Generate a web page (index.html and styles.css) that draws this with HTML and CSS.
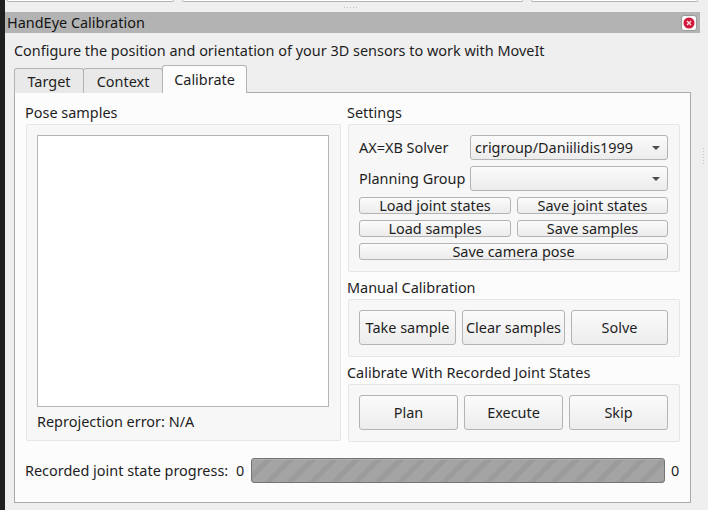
FILE: index.html
```html
<!DOCTYPE html>
<html lang="en">
<head>
    <meta charset="UTF-8">
    <title>HandEye Calibration</title>
    <link rel="stylesheet" href="styles.css">
</head>
<body>
    <div class="strip"></div>
    <div class="main">
        <div class="topbar">
            <div class="topbtn first"></div>
            <div class="topbtn middle"></div>
            <div class="topbtn last"></div>
        </div>
        <div class="grip-h"></div>
        <div class="titlebar">
            <span>HandEye Calibration</span>
            <button class="close" aria-label="Close">
                <svg width="12" height="12" viewBox="0 0 12 12">
                    <circle cx="6" cy="6" r="5.5" fill="#d3173a"/>
                    <path d="M4 4l4 4M8 4l-4 4" stroke="#f8dfe3" stroke-width="1.4" fill="none"/>
                </svg>
            </button>
        </div>
        <div class="content">
            <p class="intro">Configure the position and orientation of your 3D sensors to work with MoveIt</p>
            <div class="tabs">
                <div class="tab">Target</div>
                <div class="tab">Context</div>
                <div class="tab active">Calibrate</div>
            </div>
            <div class="pane">
                <div class="columns">
                    <div class="col-left">
                        <div class="heading">Pose samples</div>
                        <div class="group pose">
                            <div class="list"></div>
                            <div class="reproj">Reprojection error: N/A</div>
                        </div>
                    </div>
                    <div class="col-right">
                        <div class="heading">Settings</div>
                        <div class="group settings">
                            <div class="form-row">
                                <span class="form-label">AX=XB Solver</span>
                                <div class="combo">crigroup/Daniilidis1999<i class="arrow"></i></div>
                            </div>
                            <div class="form-row">
                                <span class="form-label">Planning Group</span>
                                <div class="combo"><i class="arrow"></i></div>
                            </div>
                            <div class="small-row">
                                <button class="btn small">Load joint states</button>
                                <button class="btn small">Save joint states</button>
                            </div>
                            <div class="small-row">
                                <button class="btn small">Load samples</button>
                                <button class="btn small">Save samples</button>
                            </div>
                            <button class="btn small">Save camera pose</button>
                        </div>
                        <div class="heading next">Manual Calibration</div>
                        <div class="group btn-row manual">
                            <button class="btn big">Take sample</button>
                            <button class="btn big">Clear samples</button>
                            <button class="btn big">Solve</button>
                        </div>
                        <div class="heading next">Calibrate With Recorded Joint States</div>
                        <div class="group btn-row recorded">
                            <button class="btn big">Plan</button>
                            <button class="btn big">Execute</button>
                            <button class="btn big">Skip</button>
                        </div>
                    </div>
                </div>
                <div class="progress-row">
                    <span class="progress-label">Recorded joint state progress:</span>
                    <span class="count">0</span>
                    <div class="progress"></div>
                    <span>0</span>
                </div>
            </div>
        </div>
    </div>
    <div class="grip-v"></div>
</body>
</html>
```

FILE: styles.css
```css
html, body {
    margin: 0;
    height: 510px;
    overflow: hidden;
}
body {
    display: flex;
    background-color: #efefef;
    color: #1e1e1e;
    font-family: "Noto Sans", sans-serif;
    font-size: 14.45px;
    position: relative;
}
.strip {
    width: 5px;
    background-color: #1f1f1f;
    flex: none;
}
.main {
    width: 695px;
    flex: none;
}
.topbar {
    height: 2px;
    display: flex;
    padding-left: 2px;
    gap: 8px;
}
.topbtn {
    height: 1px;
    background-color: #fff;
    border: 1px solid #b4b4b4;
    border-top: none;
    border-radius: 0 0 3px 3px;
}
.first { width: 165px; }
.middle { width: 339px; }
.last { width: 165px; }
.grip-h {
    height: 1px;
    width: 14px;
    margin: 5px 0 4px 339px;
    background-image: repeating-linear-gradient(90deg, #bdbdbd 0 1px, transparent 1px 3px);
}
.titlebar {
    height: 21px;
    background-color: #b3b3b3;
    display: flex;
    align-items: center;
    justify-content: space-between;
    padding: 0 3px 0 2px;
    color: #141414;
}
.close {
    width: 16px;
    height: 16px;
    padding: 0;
    background-color: #fbfbfb;
    border: 1px solid #9a9a9a;
    border-radius: 3px;
    display: flex;
    align-items: center;
    justify-content: center;
}
.content {
    padding: 0 9px;
}
.intro {
    margin: 0;
    height: 32px;
    line-height: 36px;
}
.tabs {
    display: flex;
    align-items: flex-end;
    height: 28px;
    margin-bottom: -1px;
    position: relative;
}
.tab {
    height: 25px;
    box-sizing: border-box;
    border: 1px solid #b4b4b4;
    border-bottom: none;
    border-radius: 3px 3px 0 0;
    background-color: #e9e9e9;
    text-align: center;
    line-height: 25px;
    margin-right: -1px;
}
.tab:nth-child(1) { width: 70px; }
.tab:nth-child(2) { width: 80px; }
.tab.active {
    width: 85px;
    height: 28px;
    background-color: #fcfcfc;
    line-height: 28px;
}
.pane {
    width: 677px;
    height: 411px;
    box-sizing: border-box;
    background-color: #fcfcfc;
    border: 1px solid #aaa;
    padding: 0 10px 0 11px;
}
.columns {
    display: flex;
    gap: 7px;
}
.col-left { width: 315px; }
.col-right { width: 332px; }
.heading {
    height: 31px;
    line-height: 40px;
    margin-left: -1px;
}
.heading.next {
    height: 27px;
    line-height: 31px;
}
.group {
    box-sizing: border-box;
    background-color: #f7f7f7;
    border: 1px solid #e6e6e6;
    border-radius: 2px;
    padding: 10px 11px 10px 10px;
}
.pose {
    height: 317px;
    padding-bottom: 0;
}
.list {
    height: 272px;
    box-sizing: border-box;
    background-color: #fff;
    border: 1px solid #b5b5b5;
}
.reproj {
    height: 29px;
    line-height: 29px;
}
.settings {
    height: 148px;
}
.form-row {
    display: flex;
    justify-content: space-between;
    align-items: center;
    margin-bottom: 6px;
}
.combo {
    position: relative;
    width: 198px;
    height: 25px;
    box-sizing: border-box;
    border: 1px solid #b4b4b4;
    border-radius: 3px;
    background-image: linear-gradient(#fbfbfb, #ececec);
    padding-left: 4px;
    line-height: 23px;
}
.arrow {
    position: absolute;
    right: 7px;
    top: 10px;
    border: 4px solid transparent;
    border-top: 4px solid #4c4c4c;
    border-bottom: none;
}
.btn {
    font: inherit;
    color: inherit;
    box-sizing: border-box;
    padding: 0;
    border: 1px solid #b4b4b4;
    border-radius: 3px;
    background-image: linear-gradient(#fbfbfb, #ececec);
}
.btn.small {
    height: 17px;
    line-height: 14px;
    display: block;
    width: 100%;
}
.small-row {
    display: grid;
    grid-template-columns: 152px 151px;
    gap: 6px;
    margin-bottom: 6px;
}
.btn-row {
    height: 58px;
    display: flex;
    gap: 6px;
}
.btn.big {
    height: 35px;
}
.manual .btn:nth-child(1) { width: 97px; }
.manual .btn:nth-child(2) { width: 103px; }
.manual .btn:nth-child(3) { width: 97px; }
.recorded .btn { width: 99px; }
.progress-row {
    display: flex;
    align-items: center;
    height: 25px;
    margin-top: 16px;
    margin-left: -1px;
}
.progress-label {
    width: 211px;
    white-space: nowrap;
}
.count {
    width: 15px;
}
.progress {
    width: 414px;
    height: 25px;
    box-sizing: border-box;
    margin-right: 6px;
    border: 1px solid #757575;
    border-radius: 3px;
    background-color: #a0a0a0;
    background-image: repeating-linear-gradient(135deg, #a4a4a4 0 8.5px, #9b9b9b 10.5px 14px, #a4a4a4 15.55px);
    box-shadow: inset 0 1px 0 #adadad;
}
.grip-v {
    position: absolute;
    left: 703px;
    top: 148px;
    width: 1px;
    height: 16px;
    background-image: repeating-linear-gradient(#c4c4c4 0 1px, transparent 1px 3px);
}
```
